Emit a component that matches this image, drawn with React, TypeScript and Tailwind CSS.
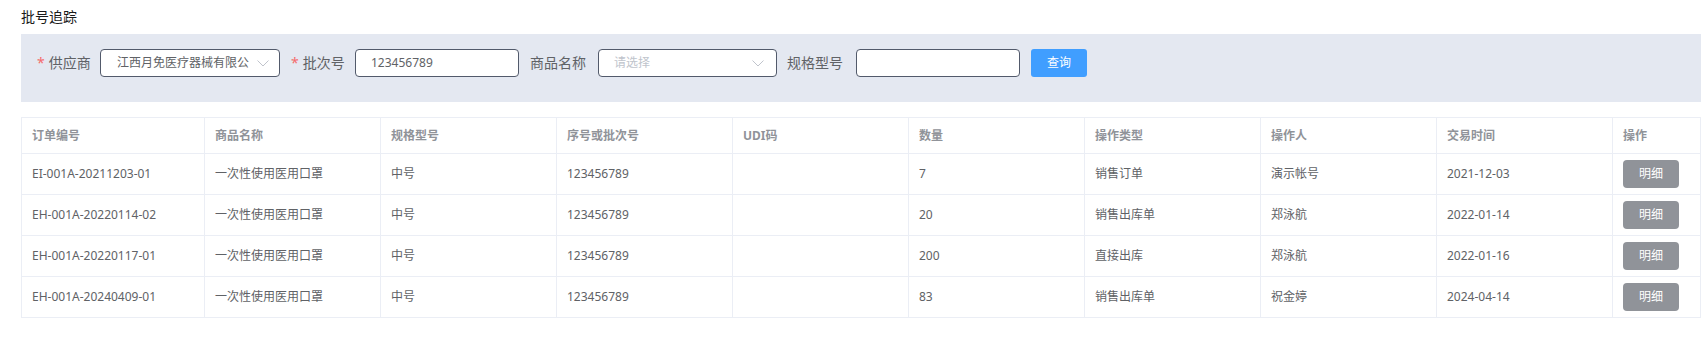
import React from "react";

const rows = [
  ["EI-001A-20211203-01", "一次性使用医用口罩", "中号", "123456789", "", "7", "销售订单", "演示帐号", "2021-12-03"],
  ["EH-001A-20220114-02", "一次性使用医用口罩", "中号", "123456789", "", "20", "销售出库单", "郑泳航", "2022-01-14"],
  ["EH-001A-20220117-01", "一次性使用医用口罩", "中号", "123456789", "", "200", "直接出库", "郑泳航", "2022-01-16"],
  ["EH-001A-20240409-01", "一次性使用医用口罩", "中号", "123456789", "", "83", "销售出库单", "祝金婷", "2024-04-14"],
];

const headers = ["订单编号", "商品名称", "规格型号", "序号或批次号", "UDI码", "数量", "操作类型", "操作人", "交易时间", "操作"];

function Chevron() {
  return (
    <svg width="12" height="7" viewBox="0 0 12 7" fill="none">
      <path d="M0.5 0.5 L6 6 L11.5 0.5" stroke="#c0c4cc" strokeWidth="1" />
    </svg>
  );
}

export default function App() {
  return (
    <div
      className="w-[1703px] h-[342px] bg-white px-[21px] text-[#606266]"
      style={{ fontFamily: '"Noto Sans", "Noto Sans CJK SC", sans-serif' }}
    >
      <div className="h-[34px] flex items-center text-[14px] text-[#1a1a1a] leading-none">批号追踪</div>

      <div className="w-[1680px] h-[68px] bg-[#e4e8f1] pl-[16px] pt-[15px] flex items-start">
        <div className="flex items-center h-[28px]">
          <label className="w-[63px] pr-[12px] text-right text-[14px] leading-none whitespace-nowrap">
            <span className="text-[#f56c6c] mr-[4px]">*</span>供应商
          </label>
          <div className="w-[180px] h-[28px] border border-[#525a6b] rounded-[4px] bg-white flex items-center justify-between pl-[16px] pr-[10px] text-[12px]">
            <span className="whitespace-nowrap overflow-hidden">江西月免医疗器械有限公</span>
            <Chevron />
          </div>
        </div>
        <div className="flex items-center h-[28px] ml-[11px]">
          <label className="w-[64px] pr-[13px] text-right text-[14px] leading-none whitespace-nowrap">
            <span className="text-[#f56c6c] mr-[4px]">*</span>批次号
          </label>
          <div className="w-[164px] h-[28px] border border-[#525a6b] rounded-[4px] bg-white flex items-center pl-[15px] text-[12px]">
            123456789
          </div>
        </div>
        <div className="flex items-center h-[28px] ml-[11px]">
          <label className="w-[68px] pr-[12px] text-left text-[14px] leading-none whitespace-nowrap">商品名称</label>
          <div className="w-[179px] h-[28px] border border-[#525a6b] rounded-[4px] bg-white flex items-center justify-between pl-[15px] pr-[12px] text-[12px]">
            <span className="text-[#c0c4cc]">请选择</span>
            <Chevron />
          </div>
        </div>
        <div className="flex items-center h-[28px] ml-[10px]">
          <label className="w-[69px] pr-[13px] text-left text-[14px] leading-none whitespace-nowrap">规格型号</label>
          <div className="w-[164px] h-[28px] border border-[#525a6b] rounded-[4px] bg-white" />
        </div>
        <button className="ml-[11px] w-[56px] h-[28px] rounded-[3px] bg-[#409eff] text-white text-[12px] flex items-center justify-center">
          查询
        </button>
      </div>

      <div className="mt-[15px] w-[1680px] border-l border-t border-[#ebeef5] grid grid-cols-[183px_repeat(8,176px)_88px] text-[12px]">
        {headers.map((h) => (
          <div
            key={h}
            className="h-[36px] border-r border-b border-[#ebeef5] pl-[10px] flex items-center font-bold text-[#909399] whitespace-nowrap"
          >
            {h}
          </div>
        ))}
        {rows.map((r, i) => (
          <React.Fragment key={i}>
            {r.map((c, j) => (
              <div
                key={j}
                className="h-[41px] border-r border-b border-[#ebeef5] pl-[10px] flex items-center whitespace-nowrap"
              >
                {c}
              </div>
            ))}
            <div className="h-[41px] border-r border-b border-[#ebeef5] pl-[10px] flex items-center">
              <button className="w-[56px] h-[28px] rounded-[4px] bg-[#909399] text-white text-[12px] flex items-center justify-center">
                明细
              </button>
            </div>
          </React.Fragment>
        ))}
      </div>
    </div>
  );
}
